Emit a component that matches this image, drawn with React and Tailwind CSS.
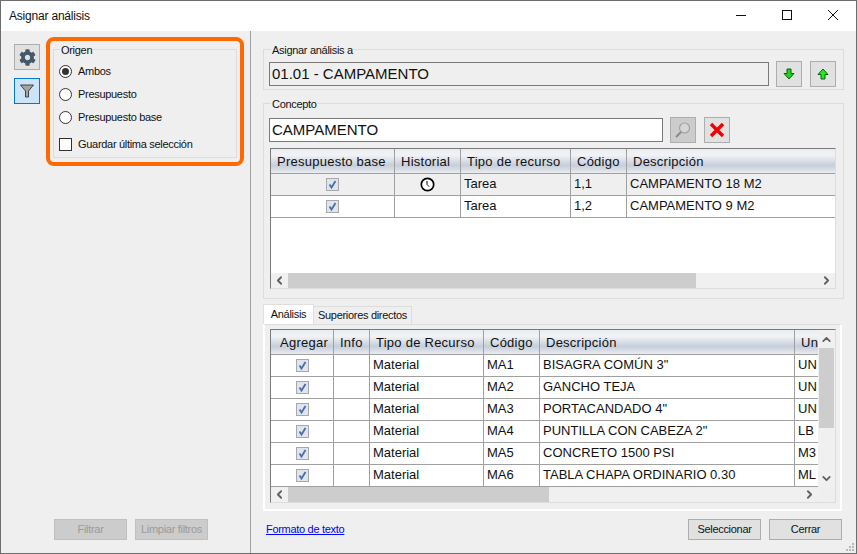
import React from "react";
import { FaCog } from "react-icons/fa";
import { ChevronLeft, ChevronRight, ChevronUp, ChevronDown } from "lucide-react";

const FONT = "font-['Liberation_Sans',Arial,sans-serif]";

const TOP_COLUMNS = [124, 66, 110, 56, 208];
const BOTTOM_COLUMNS = [63, 36, 114, 56, 255, 23];

const TOP_HEADERS = ["Presupuesto base", "Historial", "Tipo de recurso", "Código", "Descripción"];
const BOTTOM_HEADERS = ["Agregar", "Info", "Tipo de Recurso", "Código", "Descripción", "Uni"];

const TOP_ROWS = [
  { history: true, type: "Tarea", code: "1,1", description: "CAMPAMENTO 18 M2" },
  { history: false, type: "Tarea", code: "1,2", description: "CAMPAMENTO 9 M2" },
];

const BOTTOM_ROWS = [
  { code: "MA1", description: 'BISAGRA COMÚN 3"', unit: "UN" },
  { code: "MA2", description: "GANCHO TEJA", unit: "UN" },
  { code: "MA3", description: 'PORTACANDADO 4"', unit: "UN" },
  { code: "MA4", description: 'PUNTILLA CON CABEZA 2"', unit: "LB" },
  { code: "MA5", description: "CONCRETO 1500 PSI", unit: "M3" },
  { code: "MA6", description: "TABLA CHAPA ORDINARIO 0.30", unit: "ML" },
];

const Radio = ({ label, checked }) => (
  <div className="flex h-[23px] items-center gap-[6px]">
    <span className="flex h-[13px] w-[13px] items-center justify-center rounded-full border border-[#333] bg-white">
      {checked && <span className="h-[7px] w-[7px] rounded-full bg-[#333]" />}
    </span>
    <span>{label}</span>
  </div>
);

const GridCheck = () => (
  <svg width="13" height="13" viewBox="0 0 13 13" className="mx-auto block">
    <rect x="0.5" y="0.5" width="12" height="12" fill="#dfe5ee" stroke="#a8a8a8" />
    <path d="M3.5 6.5 L5.5 9.5 L9.5 3" fill="none" stroke="#4a6fa5" strokeWidth="1.8" />
  </svg>
);

const ClockIcon = () => (
  <svg width="15" height="15" viewBox="0 0 15 15" className="mx-auto block">
    <circle cx="7.5" cy="7.5" r="6.2" fill="white" stroke="#000" strokeWidth="1.7" />
    <path d="M7 4 V7.5 L9 9.5" fill="none" stroke="#000" strokeWidth="1" />
  </svg>
);

const FunnelIcon = () => (
  <svg width="14" height="14" viewBox="0 0 14 14">
    <path d="M0.5 1 H13.5 L8.5 7 V13 L5.5 13 V7 Z" fill="#a3a3a3" stroke="#444" strokeWidth="1" />
  </svg>
);

const ArrowIcon = ({ up }) => (
  <svg width="12" height="12" viewBox="0 0 12 12" className={up ? "" : "rotate-180"}>
    <path d="M6 1 L11 6.5 H8 V11 H4 V6.5 H1 Z" fill={up ? "#19f019" : "#19d919"} stroke="#145a14" strokeWidth="1" />
  </svg>
);

const SearchIcon = () => (
  <svg width="18" height="18" viewBox="0 0 18 18">
    <circle cx="10.5" cy="7" r="5" fill="#d6d6d6" stroke="#a3a3a3" strokeWidth="1.2" />
    <path d="M7 11 L2 16" stroke="#8a8a8a" strokeWidth="2" />
  </svg>
);

const DeleteIcon = () => (
  <svg width="16" height="16" viewBox="0 0 16 16">
    <path d="M2 2 L14 14 M14 2 L2 14" stroke="#f00000" strokeWidth="3.4" />
  </svg>
);

const IconButton = ({ children, disabled }) => (
  <button className={`flex h-[26px] w-[26px] items-center justify-center border border-[#adadad] ${disabled ? "bg-[#cccccc]" : "bg-[#e1e1e1]"}`}>
    {children}
  </button>
);

const Group = ({ title, className, legendClass = "ml-[2px]", children }) => (
  <fieldset className={`min-w-0 border border-[#dcdcdc] px-[5px] ${className}`}>
    <legend className={`h-[13px] px-[1px] text-[11px] leading-[15px] tracking-[-0.3px] text-[#111] ${legendClass}`}>{title}</legend>
    {children}
  </fieldset>
);

const ActionButton = ({ children, disabled }) => (
  <button className={`h-[21px] w-[73px] border text-[11px] tracking-[-0.3px] ${disabled ? "border-[#bfbfbf] bg-[#cccccc] text-[#9b9b9b]" : "border-[#adadad] bg-[#e1e1e1] text-[#111]"}`}>
    {children}
  </button>
);

const HeaderCell = ({ children, last, className = "pl-[6px]" }) => (
  <th className={`h-[25px] overflow-hidden whitespace-nowrap border-b border-[#a0a0a0] bg-[linear-gradient(to_bottom,#e9ecf0_0%,#f2f3f6_25%,#d9dee6_50%,#c6cedb_68%,#dde1e8_90%,#eceef2_100%)] pb-0 pr-0 pt-[2px] text-left text-[13px] font-normal tracking-[0.25px] text-[#111] ${className} ${last ? "" : "border-r"}`}>
    {children}
  </th>
);

const Cell = ({ children, last, bg }) => (
  <td className={`h-[22px] overflow-hidden whitespace-nowrap border-b border-[#a0a0a0] p-0 pb-[2px] pl-[3px] text-[13px] leading-[19px] text-[#111] ${bg} ${last ? "" : "border-r"}`}>
    {children}
  </td>
);

const IconCell = ({ children, bg }) => (
  <td className={`h-[22px] overflow-hidden border-b border-r border-[#a0a0a0] p-0 ${bg}`}>
    {children}
  </td>
);

const HScrollBar = ({ thumb }) => (
  <div className="flex h-[15px] min-w-0 flex-1 items-center bg-[#f0f0f0]">
    <span className="flex w-[17px] shrink-0 justify-center"><ChevronLeft size={13} strokeWidth={3.4} color="#606060" /></span>
    <div className="h-[15px] flex-1">
      <div className={`h-full bg-[#cdcdcd] ${thumb}`} />
    </div>
    <span className="flex w-[17px] shrink-0 justify-center"><ChevronRight size={13} strokeWidth={3.4} color="#606060" /></span>
  </div>
);

const ColGroup = ({ columns }) => (
  <colgroup>
    {columns.map((width, index) => (
      <col key={index} style={{ width }} />
    ))}
  </colgroup>
);

const TopGrid = () => (
  <div className="ml-[1px] mt-[5px] flex h-[141px] w-[566px] flex-col border border-[#dcdcdc] border-l-[#7a7a7a] border-t-[#7a7a7a] bg-white">
    <div className="min-h-0 flex-1 overflow-hidden">
      <table className="w-[564px] table-fixed border-separate border-spacing-0">
        <ColGroup columns={TOP_COLUMNS} />
        <thead>
          <tr>
            {TOP_HEADERS.map((header, index) => (
              <HeaderCell key={header} last={index === 4}>{header}</HeaderCell>
            ))}
          </tr>
        </thead>
        <tbody>
          {TOP_ROWS.map((row, index) => {
            const bg = index === 0 ? "bg-[#efefef]" : "bg-white";
            return (
              <tr key={row.code}>
                <IconCell bg={bg}><GridCheck /></IconCell>
                <IconCell bg={bg}>{row.history && <ClockIcon />}</IconCell>
                <Cell bg={bg}>{row.type}</Cell>
                <Cell bg={bg}>{row.code}</Cell>
                <Cell bg={bg} last>{row.description}</Cell>
              </tr>
            );
          })}
        </tbody>
      </table>
    </div>
    <div className="flex shrink-0">
      <HScrollBar thumb="w-[408px]" />
    </div>
  </div>
);

const BottomGrid = () => (
  <div className="ml-[5px] flex h-[174px] w-[566px] flex-col border border-[#dcdcdc] border-l-[#7a7a7a] border-t-[#7a7a7a] bg-[#efefef]">
    <div className="flex min-h-0 flex-1">
      <div className="w-[547px] overflow-hidden bg-white">
        <table className="w-[547px] table-fixed border-separate border-spacing-0">
          <ColGroup columns={BOTTOM_COLUMNS} />
          <thead>
            <tr>
              {BOTTOM_HEADERS.map((header, index) => (
                <HeaderCell key={header} last={index === 5} className={index === 0 ? "pl-[9px]" : "pl-[6px]"}>{header}</HeaderCell>
              ))}
            </tr>
          </thead>
          <tbody>
            {BOTTOM_ROWS.map((row) => (
              <tr key={row.code}>
                <IconCell bg="bg-white"><GridCheck /></IconCell>
                <IconCell bg="bg-white" />
                <Cell bg="bg-white">Material</Cell>
                <Cell bg="bg-white">{row.code}</Cell>
                <Cell bg="bg-white">{row.description}</Cell>
                <Cell bg="bg-white" last>{row.unit}</Cell>
              </tr>
            ))}
          </tbody>
        </table>
      </div>
      <div className="flex w-[17px] shrink-0 flex-col bg-[#f0f0f0]">
        <span className="flex h-[18px] shrink-0 items-center justify-center"><ChevronUp size={13} strokeWidth={3.4} color="#606060" /></span>
        <div className="flex-1 px-[1px]">
          <div className="h-[80px] bg-[#cdcdcd]" />
        </div>
        <span className="flex h-[18px] shrink-0 items-center justify-center"><ChevronDown size={13} strokeWidth={3.4} color="#606060" /></span>
      </div>
    </div>
    <div className="flex shrink-0 pr-[17px]">
      <HScrollBar thumb="w-[261px]" />
    </div>
  </div>
);

const LeftPanel = () => (
  <aside className="flex w-[250px] shrink-0 flex-col border-r border-[#a0a0a0] pt-[6px]">
    <div className="flex flex-1 items-start pl-[13px]">
      <div className="mt-[7px] flex flex-col gap-[8px]">
        <div className="flex h-[26px] w-[26px] items-center justify-center border border-[#adadad] bg-[#e1e1e1]">
          <FaCog size={17} color="#44586a" />
        </div>
        <div className="flex h-[26px] w-[26px] items-center justify-center border border-[#0078d7] bg-[#cce4f7]">
          <FunnelIcon />
        </div>
      </div>
      <div className="ml-[6px] h-[129px] w-[198px] rounded-[8px] border-[4px] border-[#ff6a00] px-[3px] pt-[2px]">
        <Group title="Origen" legendClass="ml-[1px]" className="h-[115px] pt-[4px] text-[11px] tracking-[-0.3px]">
          <Radio label="Ambos" checked />
          <Radio label="Presupuesto" />
          <Radio label="Presupuesto base" />
          <div className="mt-[7px] flex h-[16px] items-center gap-[6px]">
            <span className="h-[13px] w-[13px] border border-[#333] bg-white" />
            <span>Guardar última selección</span>
          </div>
        </Group>
      </div>
    </div>
    <div className="flex gap-[8px] pb-[13px] pl-[53px]">
      <ActionButton disabled>Filtrar</ActionButton>
      <ActionButton disabled>Limpiar filtros</ActionButton>
    </div>
  </aside>
);

const RightPanel = () => (
  <main className="flex min-w-0 flex-1 flex-col pl-[12px] pr-[12px] pt-[12px]">
    <Group title="Asignar análisis a" className="h-[47px] pt-[5px]">
      <div className="flex items-center">
        <div className="flex h-[24px] w-[500px] items-center border border-[#7a7a7a] bg-[#efefef] pl-[2px] pt-[1px] text-[15px]">01.01 - CAMPAMENTO</div>
        <div className="ml-[7px]"><IconButton><ArrowIcon /></IconButton></div>
        <div className="ml-[8px]"><IconButton><ArrowIcon up /></IconButton></div>
      </div>
    </Group>
    <Group title="Concepto" className="mt-[7px] h-[202px] pt-[7px]">
      <div className="flex items-center">
        <div className="flex h-[24px] w-[394px] items-center border border-[#7a7a7a] bg-white pl-[2px] pt-[1px] text-[15px]">CAMPAMENTO</div>
        <div className="ml-[7px]"><IconButton disabled><SearchIcon /></IconButton></div>
        <div className="ml-[8px]"><IconButton><DeleteIcon /></IconButton></div>
      </div>
      <TopGrid />
    </Group>
    <div className="mr-[2px] mt-[5px]">
      <div className="flex h-[20px] items-end text-[11px] tracking-[-0.3px]">
        <div className="flex h-[20px] w-[51px] items-center justify-center border border-b-0 border-[#e0e0e0] bg-white">Análisis</div>
        <div className="flex h-[18px] w-[98px] items-center justify-center border border-b-0 border-l-0 border-[#dcdcdc] bg-[#efefef]">Superiores directos</div>
      </div>
      <div className="h-[187px] border-2 border-t border-white border-t-[#dcdcdc] pt-[4px]">
        <BottomGrid />
      </div>
    </div>
    <div className="mr-[2px] mt-[8px] flex items-center justify-between">
      <a className="pl-[3px] text-[11px] tracking-[-0.3px] text-[#0000ff] underline">Formato de texto</a>
      <div className="flex gap-[8px]">
        <ActionButton>Seleccionar</ActionButton>
        <ActionButton>Cerrar</ActionButton>
      </div>
    </div>
  </main>
);

const App = () => (
  <div className={`relative flex h-[554px] w-[857px] flex-col overflow-hidden border border-[#6d6d6d] bg-[#efefef] text-[#111] ${FONT}`}>
    <header className="flex h-[30px] shrink-0 items-center justify-between bg-white pl-[8px] text-[12px] tracking-[-0.2px] text-[#111]">
      <span>Asignar análisis</span>
      <div className="mb-[2px] flex items-center">
        <span className="flex w-[46px] justify-center">
          <svg width="10" height="10" viewBox="0 0 10 10"><path d="M0 5.5 H10" stroke="#111" /></svg>
        </span>
        <span className="flex w-[46px] justify-center">
          <svg width="10" height="10" viewBox="0 0 10 10"><rect x="0.5" y="0.5" width="9" height="9" fill="none" stroke="#111" /></svg>
        </span>
        <span className="flex w-[46px] justify-center">
          <svg width="10" height="10" viewBox="0 0 10 10"><path d="M0 0 L10 10 M10 0 L0 10" stroke="#111" /></svg>
        </span>
      </div>
    </header>
    <div className="flex min-h-0 flex-1">
      <LeftPanel />
      <RightPanel />
    </div>
    <div className="absolute bottom-[2px] right-[2px] grid grid-cols-3 gap-[1px]">
      {[0, 1, 2, 3, 4, 5, 6, 7, 8].map((dot) => (
        <span key={dot} className={`h-[2px] w-[2px] ${[0, 1, 3].includes(dot) ? "bg-transparent" : "bg-[#b8b8b8]"}`} />
      ))}
    </div>
  </div>
);

export default App;
